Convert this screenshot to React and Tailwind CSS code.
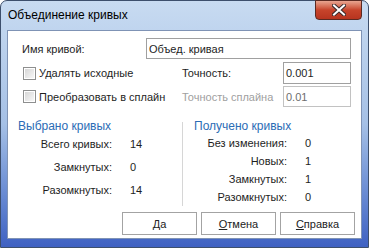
import React from 'react'

const Checkbox = ({ label }) => (
    <label className="flex items-center gap-[3px]">
        <span className="w-[13px] h-[13px] border border-[#8e8f8f] bg-white p-[1px] flex">
            <span className="flex-1 bg-gradient-to-br from-[#d7d7d7] to-[#f7f7f7]" />
        </span>
        <span>{label}</span>
    </label>
)

const Button = ({ children }) => (
    <button className="w-[75px] h-[23px] border border-[#a3a3a3] bg-white text-[#222]">
        {children}
    </button>
)

const Stat = ({ label, value, labelW }) => (
    <div className="flex items-center h-[18px]">
        <span className="text-right" style={{ width: labelW }}>{label}</span>
        <span className="ml-[18px]">{value}</span>
    </div>
)

const App = () => {
    return (
        <div className="w-[369px] h-[248px] flex flex-col rounded-t-[7px] border border-[#3d4f6c] bg-gradient-to-b from-[#c8dbf1] via-[#a5c0e6] to-[#3f61c2] font-['Liberation_Sans',sans-serif] text-[11px] leading-[14px] text-[#1e1e1e]">
            {/* Title bar */}
            <div className="h-[29px] flex items-start relative">
                <span className="ml-[7px] mt-[6px] text-[12px] leading-[16px] text-black">Объединение кривых</span>
                <div className="absolute right-[6px] top-[-1px] w-[47px] h-[20px] rounded-b-[4px] border border-[#5a2a22] bg-gradient-to-b from-[#e8a590] via-[#c7442b] to-[#b7341f] flex items-center justify-center">
                    <svg width="14" height="12" viewBox="0 0 14 12">
                        <path d="M2 1.5 L12 10.5 M12 1.5 L2 10.5" stroke="#3a2a2a" strokeWidth="4" strokeLinecap="square" />
                        <path d="M2 1.5 L12 10.5 M12 1.5 L2 10.5" stroke="#ffffff" strokeWidth="2" strokeLinecap="square" />
                    </svg>
                </div>
            </div>

            {/* Client area */}
            <div className="flex-1 mx-[6px] mb-[8px] bg-white border border-[#7f93b5] flex flex-col">
                <div className="flex items-center h-[21px] mt-[7px]">
                    <span className="w-[138px] pl-[14px]">Имя кривой:</span>
                    <div className="w-[205px] h-[21px] border border-[#a0a0a0] flex items-center pl-[2px]">Объед. кривая</div>
                </div>
                <div className="flex items-center h-[22px] mt-[3px]">
                    <div className="w-[174px] pl-[15px]"><Checkbox label="Удалять исходные" /></div>
                    <span className="w-[101px]">Точность:</span>
                    <div className="w-[68px] h-[22px] border border-[#a0a0a0] flex items-center pl-[2px]">0.001</div>
                </div>
                <div className="flex items-center h-[21px] mt-[2px]">
                    <div className="w-[174px] pl-[15px]"><Checkbox label="Преобразовать в сплайн" /></div>
                    <span className="w-[101px] text-[#a0a0a0]">Точность сплайна</span>
                    <div className="w-[68px] h-[21px] border border-[#c2c2c2] flex items-center pl-[2px] text-[#6d6d6d]">0.01</div>
                </div>

                <div className="flex mt-[11px]">
                    <div className="w-[174px] flex flex-col">
                        <span className="pl-[10px] text-[12px] leading-[16px] text-[#2b6cb5]">Выбрано кривых</span>
                        <div className="flex flex-col gap-[5px] mt-[1px]">
                            <Stat label="Всего кривых:" value="14" labelW={104} />
                            <Stat label="Замкнутых:" value="0" labelW={104} />
                            <Stat label="Разомкнутых:" value="14" labelW={104} />
                        </div>
                    </div>
                    <div className="w-px self-stretch mt-[4px] bg-[#d6d6d6]" />
                    <div className="flex-1 flex flex-col">
                        <span className="pl-[11px] text-[12px] leading-[16px] text-[#2b6cb5]">Получено кривых</span>
                        <div className="flex flex-col">
                            <Stat label="Без изменения:" value="0" labelW={104} />
                            <Stat label="Новых:" value="1" labelW={104} />
                            <Stat label="Замкнутых:" value="1" labelW={104} />
                            <Stat label="Разомкнутых:" value="0" labelW={104} />
                        </div>
                    </div>
                </div>

                <div className="flex justify-end gap-[4px] mt-auto mb-[3px] mr-[6px]">
                    <Button>Да</Button>
                    <Button><u>О</u>тмена</Button>
                    <Button><u>С</u>правка</Button>
                </div>
            </div>
        </div>
    )
}

export default App
